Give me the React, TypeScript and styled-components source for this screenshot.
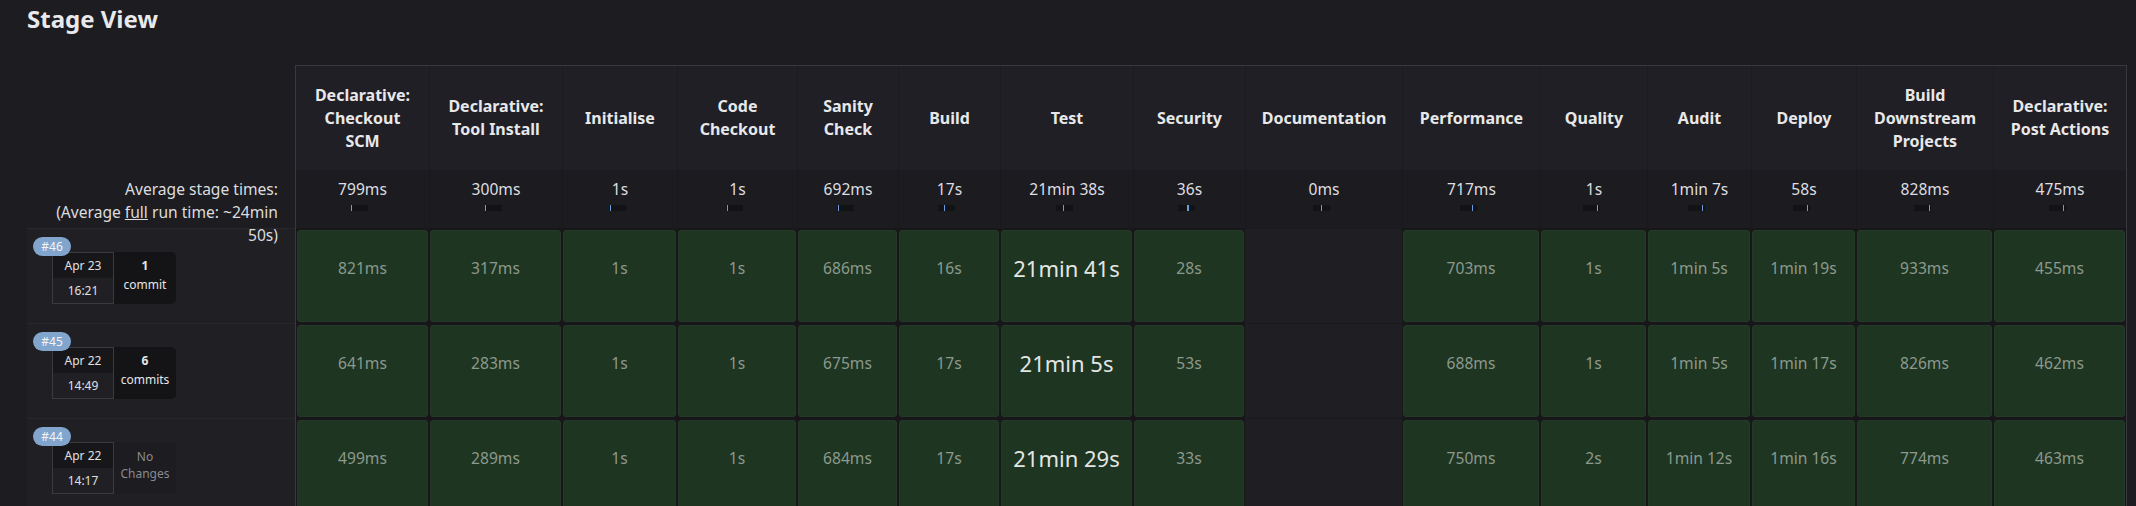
import React from "react";
import styled, { createGlobalStyle } from "styled-components";

interface Stage {
  name: string[];
  width: number;
  avg: string;
  tick: number;
}

interface Build {
  id: number;
  date: string;
  time: string;
  commits: number;
  times: (string | null)[];
}

const stages: Stage[] = [
  { name: ["Declarative:", "Checkout", "SCM"], width: 133, avg: "799ms", tick: 0.02 },
  { name: ["Declarative:", "Tool Install"], width: 133, avg: "300ms", tick: 0.02 },
  { name: ["Initialise"], width: 115, avg: "1s", tick: 0.09 },
  { name: ["Code", "Checkout"], width: 120, avg: "1s", tick: 0.06 },
  { name: ["Sanity", "Check"], width: 101, avg: "692ms", tick: 0.07 },
  { name: ["Build"], width: 102, avg: "17s", tick: 0.35 },
  { name: ["Test"], width: 133, avg: "21min 38s", tick: 0.42 },
  { name: ["Security"], width: 112, avg: "36s", tick: 0.5 },
  { name: ["Documentation"], width: 157, avg: "0ms", tick: 0.5 },
  { name: ["Performance"], width: 138, avg: "717ms", tick: 0.69 },
  { name: ["Quality"], width: 107, avg: "1s", tick: 0.88 },
  { name: ["Audit"], width: 104, avg: "1min 7s", tick: 0.8 },
  { name: ["Deploy"], width: 105, avg: "58s", tick: 0.88 },
  { name: ["Build", "Downstream", "Projects"], width: 137, avg: "828ms", tick: 0.93 },
  { name: ["Declarative:", "Post Actions"], width: 133, avg: "475ms", tick: 0.87 },
];

const builds: Build[] = [
  {
    id: 46,
    date: "Apr 23",
    time: "16:21",
    commits: 1,
    times: ["821ms", "317ms", "1s", "1s", "686ms", "16s", "21min 41s", "28s", null, "703ms", "1s", "1min 5s", "1min 19s", "933ms", "455ms"],
  },
  {
    id: 45,
    date: "Apr 22",
    time: "14:49",
    commits: 6,
    times: ["641ms", "283ms", "1s", "1s", "675ms", "17s", "21min 5s", "53s", null, "688ms", "1s", "1min 5s", "1min 17s", "826ms", "462ms"],
  },
  {
    id: 44,
    date: "Apr 22",
    time: "14:17",
    commits: 0,
    times: ["499ms", "289ms", "1s", "1s", "684ms", "17s", "21min 29s", "33s", null, "750ms", "2s", "1min 12s", "1min 16s", "774ms", "463ms"],
  },
];

const LONG_STAGE = "Test";
const COLS = stages.map((s) => `${s.width}px`).join(" ");

const GlobalStyle = createGlobalStyle`
  body {
    margin: 0;
    background: #1c1c21;
    color: #e2e2e5;
    font-family: "Noto Sans", "Open Sans", sans-serif;
    overflow: hidden;
  }
`;

const Page = styled.div`
  padding: 3px 0 0 27px;
`;

const Title = styled.h2`
  margin: 0;
  font-size: 24px;
  line-height: 32px;
  font-weight: 700;
  color: #e9e9eb;
`;

const Board = styled.div`
  display: flex;
  align-items: flex-start;
  margin-top: 30px;
`;

/* left column: labels and build info */
const LeftColumn = styled.div`
  width: 268px;
  flex: none;
`;

const HeadSpacer = styled.div`
  height: 105px;
`;

const AvgLabel = styled.div`
  position: relative;
  z-index: 2;
  height: 58px;
  box-sizing: border-box;
  padding: 8px 17px 0 0;
  text-align: right;
  font-size: 15.6px;
  line-height: 23px;
  color: #dcdcdf;
  a {
    color: inherit;
    text-decoration: underline;
  }
`;

const BuildInfo = styled.div`
  position: relative;
  height: 95px;
  box-sizing: border-box;
  border-top: 1px solid #26262b;
  background: #1f1f24;
`;

const Badge = styled.span`
  position: absolute;
  top: 8px;
  left: 6px;
  z-index: 1;
  width: 38px;
  height: 19px;
  border-radius: 10px;
  background: #82a5cd;
  color: #f2f4f8;
  font-size: 12px;
  line-height: 19px;
  text-align: center;
`;

const Changes = styled.div`
  display: flex;
  margin: 23px 0 0 25px;
`;

const DateBox = styled.div`
  width: 62px;
  height: 52px;
  box-sizing: border-box;
  border: 1px solid #3a3a3f;
  display: grid;
  grid-template-rows: 1fr 1fr;
  font-size: 12px;
  color: #e0e0e2;
  span {
    display: flex;
    align-items: center;
    justify-content: center;
  }
  span:first-child {
    background: #17171a;
  }
`;

const ChangeBox = styled.div<{ $empty: boolean }>`
  width: 62px;
  height: 52px;
  border-radius: 0 5px 5px 0;
  background: ${(p) => (p.$empty ? "#1c1c21" : "#141417")};
  color: ${(p) => (p.$empty ? "#8a8a8f" : "#e6e6e8")};
  display: flex;
  flex-direction: column;
  align-items: center;
  justify-content: center;
  padding-bottom: 6px;
  box-sizing: border-box;
  font-size: 12px;
  line-height: ${(p) => (p.$empty ? "17px" : "19px")};
  text-align: center;
  b {
    font-weight: 700;
  }
`;

/* stage table */
const Table = styled.div`
  border: 1px solid #38383e;
  border-bottom: none;
`;

const HeaderRow = styled.div`
  display: grid;
  grid-template-columns: ${COLS};
  height: 104px;
  background: #1f1f25;
`;

const HeadCell = styled.div`
  display: flex;
  align-items: center;
  justify-content: center;
  text-align: center;
  font-size: 16px;
  font-weight: 700;
  line-height: 23px;
  color: #e8e8ea;
  & + & {
    border-left: 1px solid #1b1b20;
  }
`;

const AvgRow = styled.div`
  display: grid;
  grid-template-columns: ${COLS};
  height: 58px;
  background: #1b1b20;
`;

const AvgCell = styled.div`
  padding-top: 8px;
  text-align: center;
  font-size: 15.6px;
  line-height: 22px;
  color: #dedee0;
  & + & {
    border-left: 1px solid #19191d;
  }
`;

const Bar = styled.div`
  display: flex;
  width: 17px;
  height: 6px;
  margin: 5px 0 0 calc(50% - 11.5px);
  background: #131316;
`;

const Tick = styled.div<{ $wide: boolean }>`
  width: ${(p) => (p.$wide ? "2px" : "1px")};
  background: #6b9be0;
`;

const BodyRow = styled.div`
  display: grid;
  grid-template-columns: ${COLS};
  height: 95px;
  background: #17171a;
`;

const BodyCell = styled.div<{ $empty: boolean }>`
  padding: ${(p) => (p.$empty ? "0" : "2px 1px 1px")};
  background: ${(p) => (p.$empty ? "#1e1e23" : "transparent")};
  border-top: ${(p) => (p.$empty ? "1px solid #1a1a1e" : "none")};
`;

const StageBox = styled.div<{ $big: boolean }>`
  height: 100%;
  box-sizing: border-box;
  border: 1px solid #24392a;
  border-radius: 3px;
  background: #1e3521;
  text-align: center;
  padding-top: ${(p) => (p.$big ? "22px" : "26px")};
  font-size: ${(p) => (p.$big ? "22px" : "15.6px")};
  line-height: ${(p) => (p.$big ? "30px" : "22px")};
  color: ${(p) => (p.$big ? "#e4e6e4" : "#8c998d")};
`;

const App: React.FC = () => {
  return (
    <Page>
      <GlobalStyle />
      <Title>Stage View</Title>
      <Board>
        <LeftColumn>
          <HeadSpacer />
          <AvgLabel>
            Average stage times:
            <br />
            (Average <a>full</a> run time: ~24min
            <br />
            50s)
          </AvgLabel>
          {builds.map((b) => (
            <BuildInfo key={b.id}>
              <Badge>#{b.id}</Badge>
              <Changes>
                <DateBox>
                  <span>{b.date}</span>
                  <span>{b.time}</span>
                </DateBox>
                <ChangeBox $empty={b.commits === 0}>
                  {b.commits === 0 ? (
                    <>
                      <span>No</span>
                      <span>Changes</span>
                    </>
                  ) : (
                    <>
                      <b>{b.commits}</b>
                      <span>{b.commits === 1 ? "commit" : "commits"}</span>
                    </>
                  )}
                </ChangeBox>
              </Changes>
            </BuildInfo>
          ))}
        </LeftColumn>

        <Table>
          <HeaderRow>
            {stages.map((s) => (
              <HeadCell key={s.name.join(" ")}>
                <div>
                  {s.name.map((line) => (
                    <div key={line}>{line}</div>
                  ))}
                </div>
              </HeadCell>
            ))}
          </HeaderRow>
          <AvgRow>
            {stages.map((s) => (
              <AvgCell key={s.name.join(" ")}>
                {s.avg}
                <Bar>
                  <Tick $wide={s.name[0] === "Security"} style={{ marginLeft: `${s.tick * 100}%` }} />
                </Bar>
              </AvgCell>
            ))}
          </AvgRow>
          {builds.map((b) => (
            <BodyRow key={b.id}>
              {b.times.map((t, i) => (
                <BodyCell key={i} $empty={t === null}>
                  {t !== null && <StageBox $big={stages[i].name[0] === LONG_STAGE}>{t}</StageBox>}
                </BodyCell>
              ))}
            </BodyRow>
          ))}
        </Table>
      </Board>
    </Page>
  );
};

export default App;
